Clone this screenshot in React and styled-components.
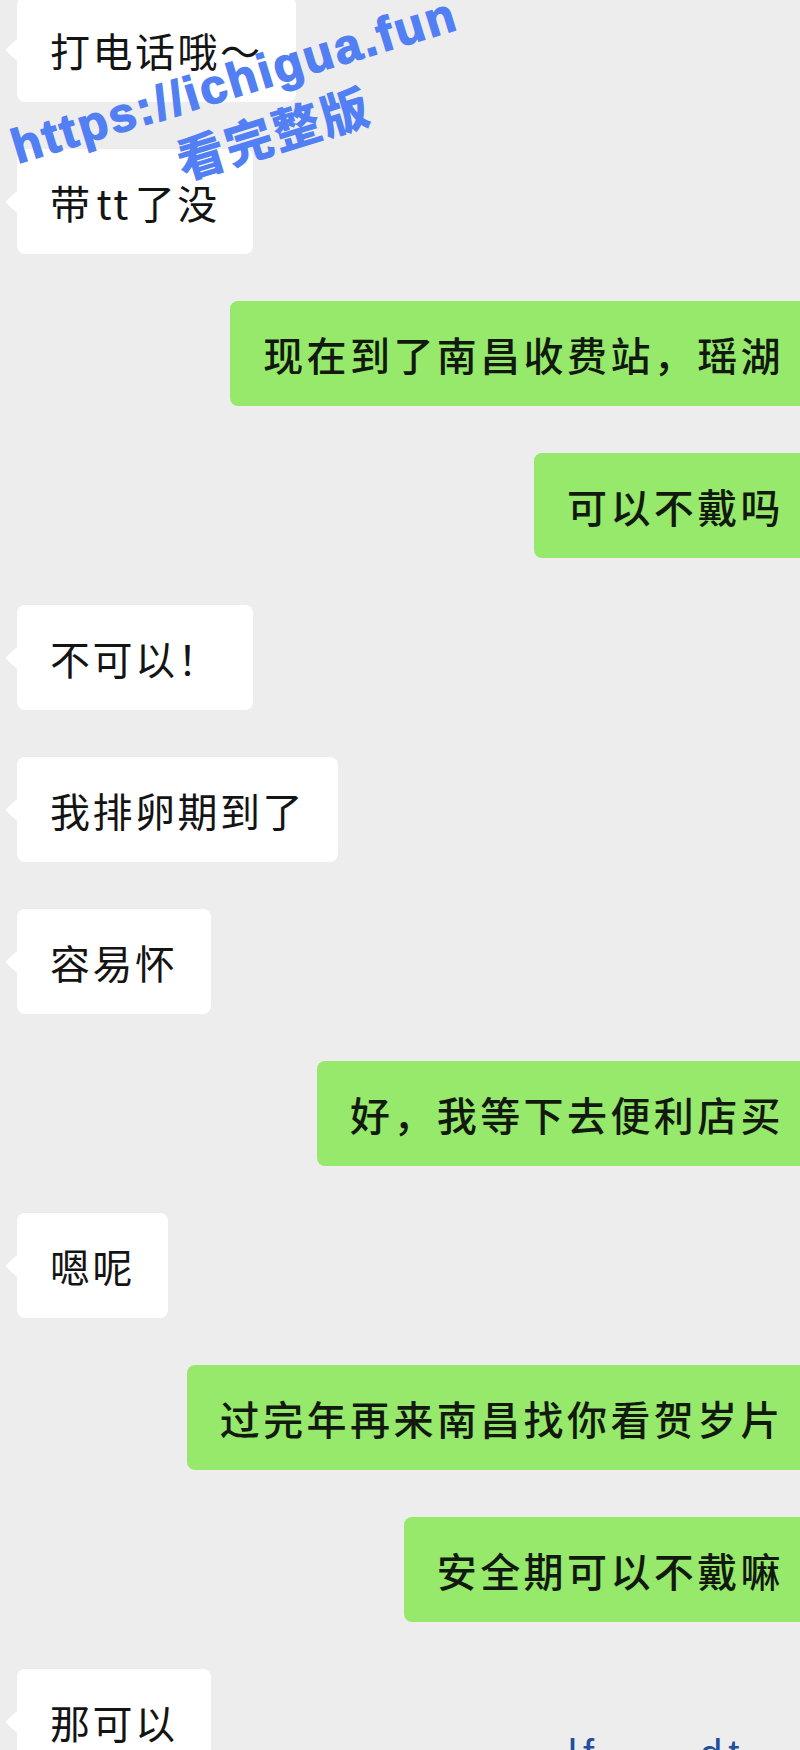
import styled, { createGlobalStyle, css } from "styled-components";

const Latin = styled.span`
  margin: 0 4px;
`;

const messages = [
  { me: false, text: "打电话哦～" },
  { me: false, text: <>带<Latin>tt</Latin>了没</> },
  { me: true, text: "现在到了南昌收费站，瑶湖" },
  { me: true, text: "可以不戴吗" },
  { me: false, text: "不可以！" },
  { me: false, text: "我排卵期到了" },
  { me: false, text: "容易怀" },
  { me: true, text: "好，我等下去便利店买" },
  { me: false, text: "嗯呢" },
  { me: true, text: "过完年再来南昌找你看贺岁片" },
  { me: true, text: "安全期可以不戴嘛" },
  { me: false, text: "那可以" },
];

export default function App() {
  return (
    <Page>
      <GlobalStyle />
      <Chat>
        {messages.map((m, i) => (
          <Row key={i} $me={m.me}>
            <Bubble $me={m.me}>{m.text}</Bubble>
          </Row>
        ))}
      </Chat>

      <Watermark>
        <WmUrl>https://ichigua.fun</WmUrl>
        <WmLabel>看完整版</WmLabel>
      </Watermark>

      <CutText>
        <span>lf</span>
        <span>dt</span>
      </CutText>
    </Page>
  );
}

const GlobalStyle = createGlobalStyle`
  html, body {
    margin: 0;
    padding: 0;
    background: #ededed;
    overflow: hidden;
  }
`;

const Page = styled.div`
  position: relative;
  width: 800px;
  height: 1750px;
  overflow: hidden;
  background: #ededed;
  font-family: "Noto Sans CJK SC", "Noto Sans", sans-serif;
`;

const Chat = styled.div`
  display: flex;
  flex-direction: column;
  gap: 47px;
  margin-top: -3px;
`;

const Row = styled.div`
  display: flex;
  justify-content: ${(p) => (p.$me ? "flex-end" : "flex-start")};
  padding-left: ${(p) => (p.$me ? "0" : "17px")};
`;

const Bubble = styled.div`
  position: relative;
  box-sizing: border-box;
  height: 105px;
  display: flex;
  align-items: center;
  white-space: nowrap;
  font-size: 40px;

  ${(p) =>
    p.$me
      ? css`
          padding: 0 16px 0 33px;
          background: #96e96a;
          border-radius: 8px 0 0 8px;
          color: #121a10;
          font-weight: 500;
          letter-spacing: 3.4px;
        `
      : css`
          padding: 0 33px;
          background: #ffffff;
          border-radius: 8px;
          color: #141414;
          letter-spacing: 2.5px;

          &::before {
            content: "";
            position: absolute;
            left: -12px;
            top: 50%;
            margin-top: -11px;
            border-top: 11px solid transparent;
            border-bottom: 11px solid transparent;
            border-right: 12px solid #ffffff;
          }
        `}
`;

const Watermark = styled.div`
  position: absolute;
  left: 243px;
  top: 109px;
  width: 540px;
  transform: translate(-50%, -50%) rotate(-17deg);
  color: #527ff3;
  text-align: center;
  white-space: nowrap;
  pointer-events: none;
`;

const WmUrl = styled.div`
  font-family: "Liberation Sans", Arial, sans-serif;
  font-weight: 700;
  font-size: 48px;
  line-height: 52px;
  letter-spacing: 2.5px;
  -webkit-text-stroke: 1.5px #527ff3;
`;

const WmLabel = styled.div`
  margin-top: 7px;
  padding-left: 44px;
  font-family: "Noto Sans CJK SC", sans-serif;
  font-weight: 900;
  font-size: 48px;
  line-height: 52px;
  letter-spacing: 2px;
`;

const CutText = styled.div`
  position: absolute;
  left: 568px;
  top: 1734px;
  display: flex;
  gap: 100px;
  color: #1f4f9e;
  font-family: "Liberation Sans", Arial, sans-serif;
  font-size: 40px;
  line-height: 1;
  letter-spacing: 6px;
`;
